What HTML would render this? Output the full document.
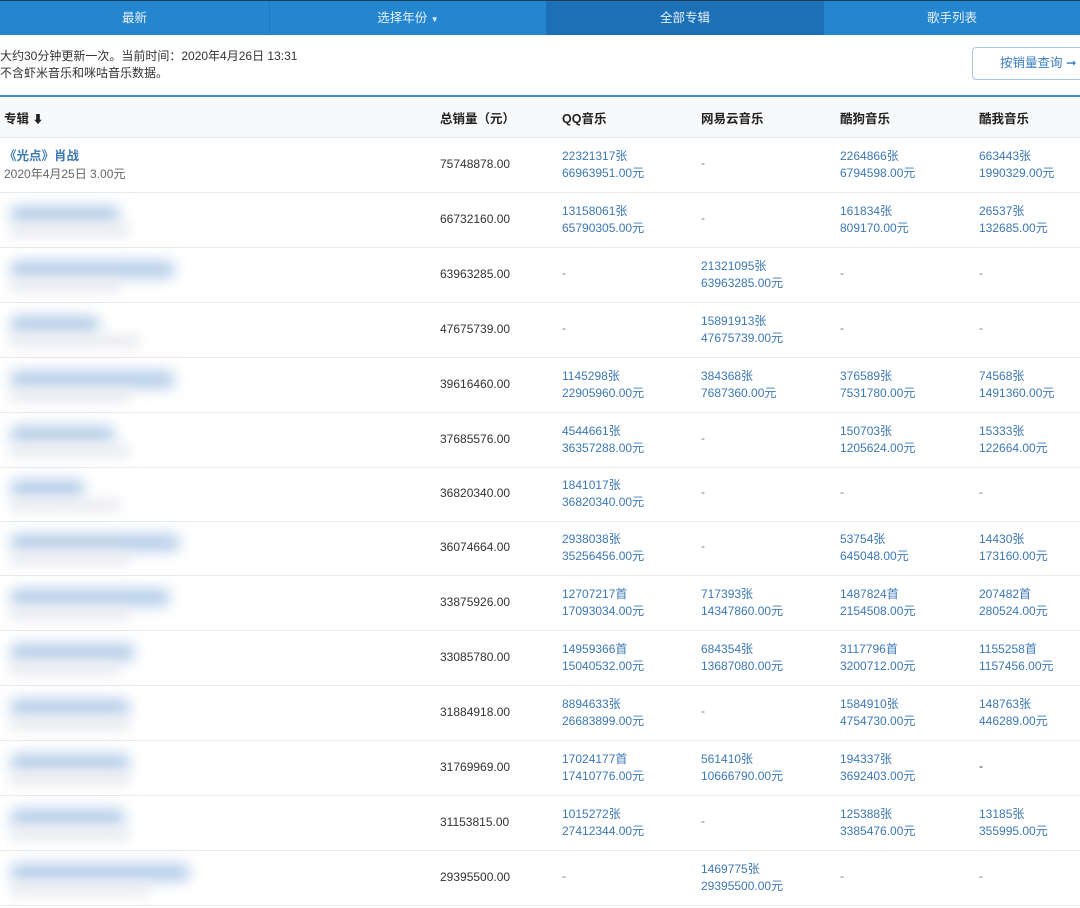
<!DOCTYPE html>
<html><head><meta charset="utf-8"><style>
*{margin:0;padding:0;box-sizing:border-box}
body{width:1080px;height:908px;overflow:hidden;background:#fff;font-family:"Liberation Sans","Noto Sans CJK SC",sans-serif;font-size:12px;color:#333;position:relative}
.nav{position:absolute;left:0;top:0;width:1080px;height:35px;background:#2586d0;border-top:1px solid #1b3d5e}
.nav div{position:absolute;top:0;height:34px;line-height:34px;text-align:center;color:#e6f0fa;font-size:12.5px}
.info{position:absolute;left:0;top:48px;line-height:17px;font-size:12px;color:#333}
.btn{position:absolute;left:972px;top:47px;width:120px;height:33px;border:1px solid #a9c6e3;border-radius:4px;color:#3a7cc0;line-height:31px;padding-left:27px;font-size:12.5px}
.head{position:absolute;left:0;top:95px;width:1080px;height:43px;background:#f8f9fb;border-top:2px solid #3a8fd4;border-bottom:1px solid #e6e8eb;font-weight:bold;color:#222}
.head span{position:absolute;top:11px;font-size:12.5px}
.row{position:absolute;left:0;width:1080px;height:55px;border-bottom:1px solid #e8eaed}
.c{position:absolute;top:10px;line-height:17px;color:#3c78b4;font-size:12px}
.d{position:absolute;top:18px;color:#777}
.t{position:absolute;left:440px;top:19px;color:#333;font-size:12px}
.bl{position:absolute;left:10px;top:13px;height:17px;background:#b3cce8;filter:blur(7px);border-radius:8px}
.bg{position:absolute;left:10px;top:32px;height:12px;background:#e8eaee;filter:blur(6px)}
</style></head><body>
<div class="nav">
<div style="left:0;width:270px;border-right:1px solid #1f79c0">最新</div>
<div style="left:270px;width:276px">选择年份 <span style="font-size:8px">▼</span></div>
<div style="left:546px;width:278px;background:#1c70b5">全部专辑</div>
<div style="left:824px;width:256px">歌手列表</div>
</div>
<div class="info">大约30分钟更新一次。当前时间：2020年4月26日 13:31<br>不含虾米音乐和咪咕音乐数据。</div>
<div class="btn">按销量查询 ➞</div>
<div class="head">
<span style="left:4px">专辑 <span style="position:static;font-size:11px">⬇</span></span>
<span style="left:440px">总销量（元）</span>
<span style="left:562px">QQ音乐</span>
<span style="left:701px">网易云音乐</span>
<span style="left:840px">酷狗音乐</span>
<span style="left:979px">酷我音乐</span>
</div>
<div class="row" style="top:138px">
<div class="c" style="left:4px;top:10px;font-weight:bold;font-size:12.5px">《光点》肖战</div>
<div style="position:absolute;left:4px;top:27px;color:#666">2020年4月25日 3.00元</div>
<div class="t">75748878.00</div>
<div class="c" style="left:562px">22321317张<br>66963951.00元</div><div class="d" style="left:701px">-</div>
<div class="c" style="left:840px">2264866张<br>6794598.00元</div><div class="c" style="left:979px">663443张<br>1990329.00元</div>
</div>
<div class="row" style="top:193px"><div class="bl" style="width:110px"></div><div class="bg" style="width:120px"></div><div class="t">66732160.00</div>
<div class="c" style="left:562px">13158061张<br>65790305.00元</div><div class="d" style="left:701px">-</div><div class="c" style="left:840px">161834张<br>809170.00元</div><div class="c" style="left:979px">26537张<br>132685.00元</div></div>
<div class="row" style="top:248px"><div class="bl" style="width:165px"></div><div class="bg" style="width:110px"></div><div class="t">63963285.00</div>
<div class="d" style="left:562px">-</div><div class="c" style="left:701px">21321095张<br>63963285.00元</div><div class="d" style="left:840px">-</div><div class="d" style="left:979px">-</div></div>
<div class="row" style="top:303px"><div class="bl" style="width:90px"></div><div class="bg" style="width:130px"></div><div class="t">47675739.00</div>
<div class="d" style="left:562px">-</div><div class="c" style="left:701px">15891913张<br>47675739.00元</div><div class="d" style="left:840px">-</div><div class="d" style="left:979px">-</div></div>
<div class="row" style="top:358px"><div class="bl" style="width:165px"></div><div class="bg" style="width:120px"></div><div class="t">39616460.00</div>
<div class="c" style="left:562px">1145298张<br>22905960.00元</div><div class="c" style="left:701px">384368张<br>7687360.00元</div><div class="c" style="left:840px">376589张<br>7531780.00元</div><div class="c" style="left:979px">74568张<br>1491360.00元</div></div>
<div class="row" style="top:413px"><div class="bl" style="width:105px"></div><div class="bg" style="width:120px"></div><div class="t">37685576.00</div>
<div class="c" style="left:562px">4544661张<br>36357288.00元</div><div class="d" style="left:701px">-</div><div class="c" style="left:840px">150703张<br>1205624.00元</div><div class="c" style="left:979px">15333张<br>122664.00元</div></div>
<div class="row" style="top:467px"><div class="bl" style="width:75px"></div><div class="bg" style="width:110px"></div><div class="t">36820340.00</div>
<div class="c" style="left:562px">1841017张<br>36820340.00元</div><div class="d" style="left:701px">-</div><div class="d" style="left:840px">-</div><div class="d" style="left:979px">-</div></div>
<div class="row" style="top:521px"><div class="bl" style="width:170px"></div><div class="bg" style="width:120px"></div><div class="t">36074664.00</div>
<div class="c" style="left:562px">2938038张<br>35256456.00元</div><div class="d" style="left:701px">-</div><div class="c" style="left:840px">53754张<br>645048.00元</div><div class="c" style="left:979px">14430张<br>173160.00元</div></div>
<div class="row" style="top:576px"><div class="bl" style="width:160px"></div><div class="bg" style="width:120px"></div><div class="t">33875926.00</div>
<div class="c" style="left:562px">12707217首<br>17093034.00元</div><div class="c" style="left:701px">717393张<br>14347860.00元</div><div class="c" style="left:840px">1487824首<br>2154508.00元</div><div class="c" style="left:979px">207482首<br>280524.00元</div></div>
<div class="row" style="top:631px"><div class="bl" style="width:125px"></div><div class="bg" style="width:110px"></div><div class="t">33085780.00</div>
<div class="c" style="left:562px">14959366首<br>15040532.00元</div><div class="c" style="left:701px">684354张<br>13687080.00元</div><div class="c" style="left:840px">3117796首<br>3200712.00元</div><div class="c" style="left:979px">1155258首<br>1157456.00元</div></div>
<div class="row" style="top:686px"><div class="bl" style="width:120px"></div><div class="bg" style="width:120px"></div><div class="t">31884918.00</div>
<div class="c" style="left:562px">8894633张<br>26683899.00元</div><div class="d" style="left:701px">-</div><div class="c" style="left:840px">1584910张<br>4754730.00元</div><div class="c" style="left:979px">148763张<br>446289.00元</div></div>
<div class="row" style="top:741px"><div class="bl" style="width:120px"></div><div class="bg" style="width:120px"></div><div class="t">31769969.00</div>
<div class="c" style="left:562px">17024177首<br>17410776.00元</div><div class="c" style="left:701px">561410张<br>10666790.00元</div><div class="c" style="left:840px">194337张<br>3692403.00元</div><div class="d" style="left:979px;color:#333">-</div></div>
<div class="row" style="top:796px"><div class="bl" style="width:115px"></div><div class="bg" style="width:120px"></div><div class="t">31153815.00</div>
<div class="c" style="left:562px">1015272张<br>27412344.00元</div><div class="d" style="left:701px">-</div><div class="c" style="left:840px">125388张<br>3385476.00元</div><div class="c" style="left:979px">13185张<br>355995.00元</div></div>
<div class="row" style="top:851px"><div class="bl" style="width:180px"></div><div class="bg" style="width:140px"></div><div class="t">29395500.00</div>
<div class="d" style="left:562px">-</div><div class="c" style="left:701px">1469775张<br>29395500.00元</div><div class="d" style="left:840px">-</div><div class="d" style="left:979px">-</div></div>
</body></html>
